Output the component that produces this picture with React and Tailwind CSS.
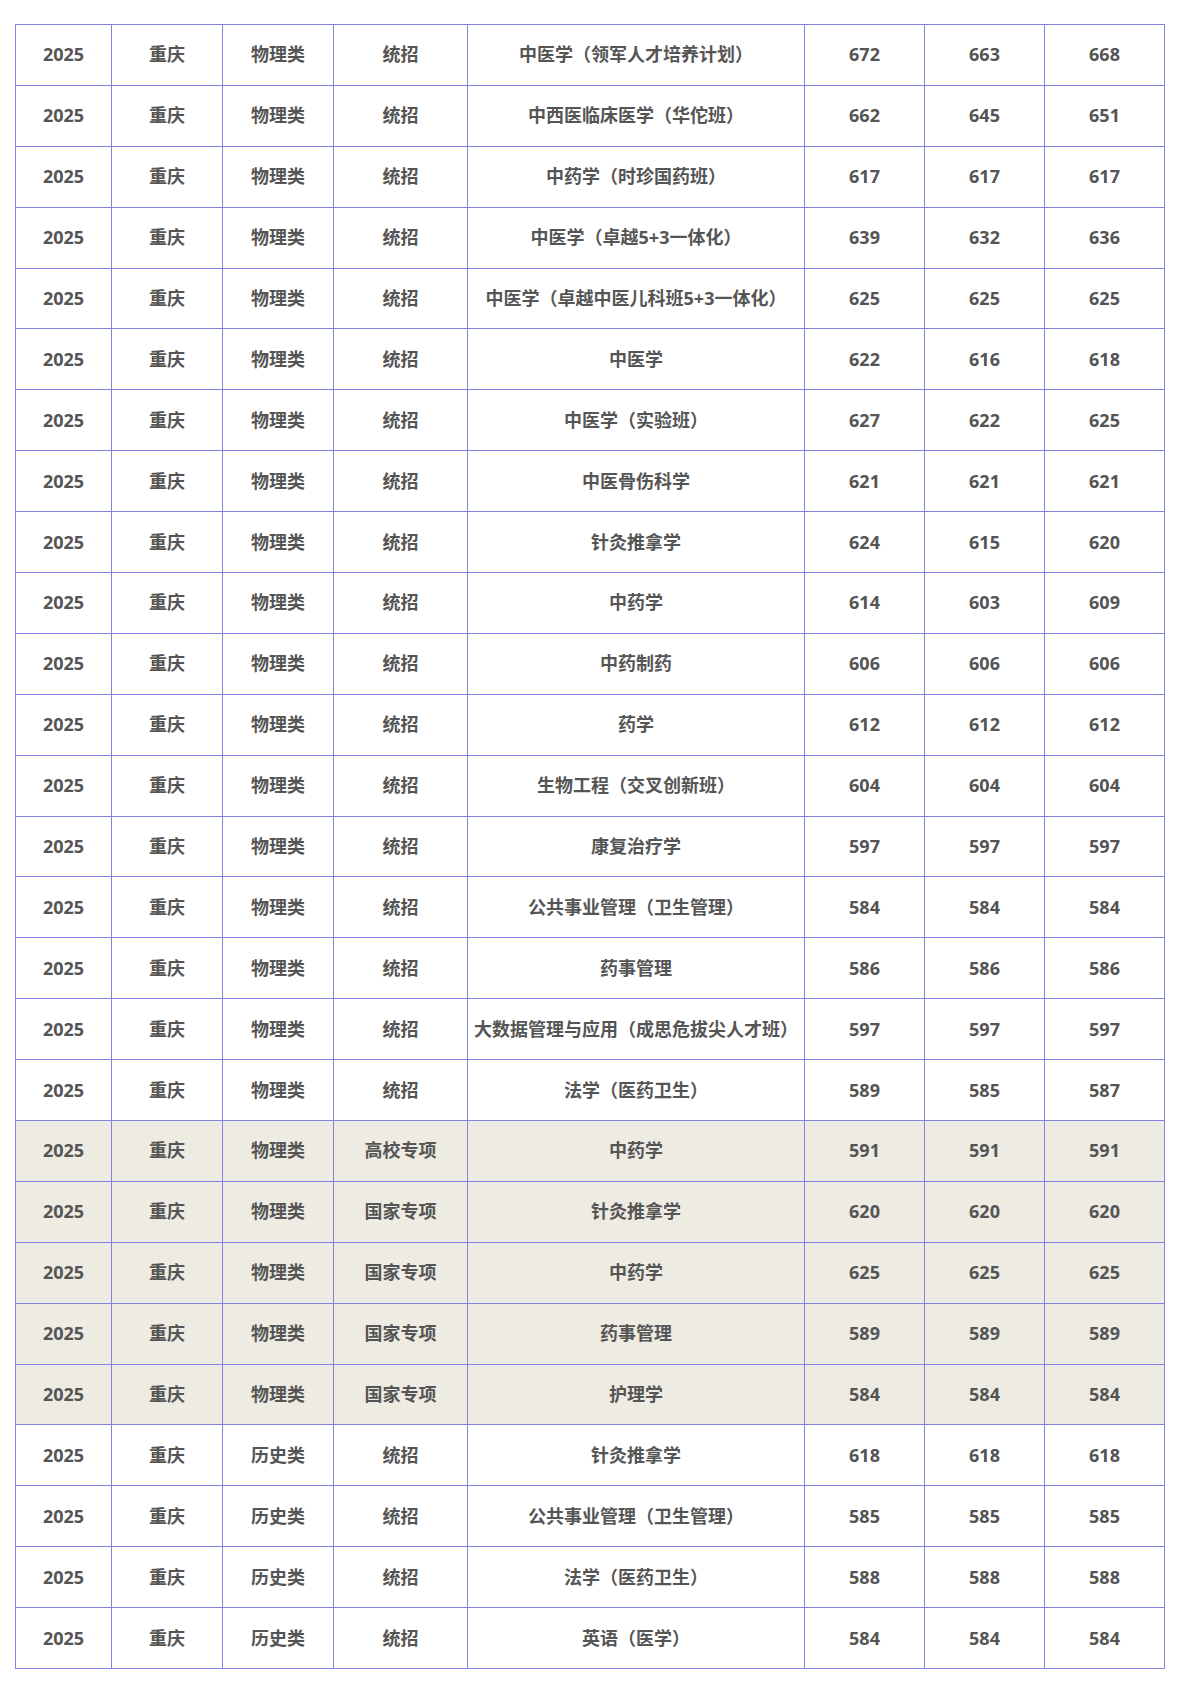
import React from "react";

const rows = [
  ["物理类", "统招", "中医学（领军人才培养计划）", "672", "663", "668"],
  ["物理类", "统招", "中西医临床医学（华佗班）", "662", "645", "651"],
  ["物理类", "统招", "中药学（时珍国药班）", "617", "617", "617"],
  ["物理类", "统招", "中医学（卓越5+3一体化）", "639", "632", "636"],
  ["物理类", "统招", "中医学（卓越中医儿科班5+3一体化）", "625", "625", "625"],
  ["物理类", "统招", "中医学", "622", "616", "618"],
  ["物理类", "统招", "中医学（实验班）", "627", "622", "625"],
  ["物理类", "统招", "中医骨伤科学", "621", "621", "621"],
  ["物理类", "统招", "针灸推拿学", "624", "615", "620"],
  ["物理类", "统招", "中药学", "614", "603", "609"],
  ["物理类", "统招", "中药制药", "606", "606", "606"],
  ["物理类", "统招", "药学", "612", "612", "612"],
  ["物理类", "统招", "生物工程（交叉创新班）", "604", "604", "604"],
  ["物理类", "统招", "康复治疗学", "597", "597", "597"],
  ["物理类", "统招", "公共事业管理（卫生管理）", "584", "584", "584"],
  ["物理类", "统招", "药事管理", "586", "586", "586"],
  ["物理类", "统招", "大数据管理与应用（成思危拔尖人才班）", "597", "597", "597"],
  ["物理类", "统招", "法学（医药卫生）", "589", "585", "587"],
  ["物理类", "高校专项", "中药学", "591", "591", "591", true],
  ["物理类", "国家专项", "针灸推拿学", "620", "620", "620", true],
  ["物理类", "国家专项", "中药学", "625", "625", "625", true],
  ["物理类", "国家专项", "药事管理", "589", "589", "589", true],
  ["物理类", "国家专项", "护理学", "584", "584", "584", true],
  ["历史类", "统招", "针灸推拿学", "618", "618", "618"],
  ["历史类", "统招", "公共事业管理（卫生管理）", "585", "585", "585"],
  ["历史类", "统招", "法学（医药卫生）", "588", "588", "588"],
  ["历史类", "统招", "英语（医学）", "584", "584", "584"],
];

const widths = ["w-[96px]", "w-[111px]", "w-[111px]", "w-[134px]", "w-[337px]", "w-[120px]", "w-[120px]", "w-[120px]"];

export default function App() {
  return (
    <div
      className="w-[1190px] min-h-[1683px] bg-white pt-[24px] pl-[15px]"
      style={{ fontFamily: '"Open Sans", "Noto Sans CJK SC", sans-serif' }}
    >
      <table className="border-collapse table-fixed w-[1150px] text-[18px] font-bold text-[#555555]">
        <colgroup>
          {widths.map((w, i) => (
            <col key={i} className={w} />
          ))}
        </colgroup>
        <tbody>
          {rows.map((r, i) => {
            const hl = r[6] === true;
            const cells = ["2025", "重庆", r[0], r[1], r[2], r[3], r[4], r[5]];
            return (
              <tr key={i} className={`h-[60.9px] ${hl ? "bg-[#edebe2]" : "bg-white"}`}>
                {cells.map((c, j) => (
                  <td
                    key={j}
                    className="border border-[#8282e0] text-center align-middle p-0 pb-[1px] leading-none whitespace-nowrap"
                  >
                    {c}
                  </td>
                ))}
              </tr>
            );
          })}
        </tbody>
      </table>
    </div>
  );
}
